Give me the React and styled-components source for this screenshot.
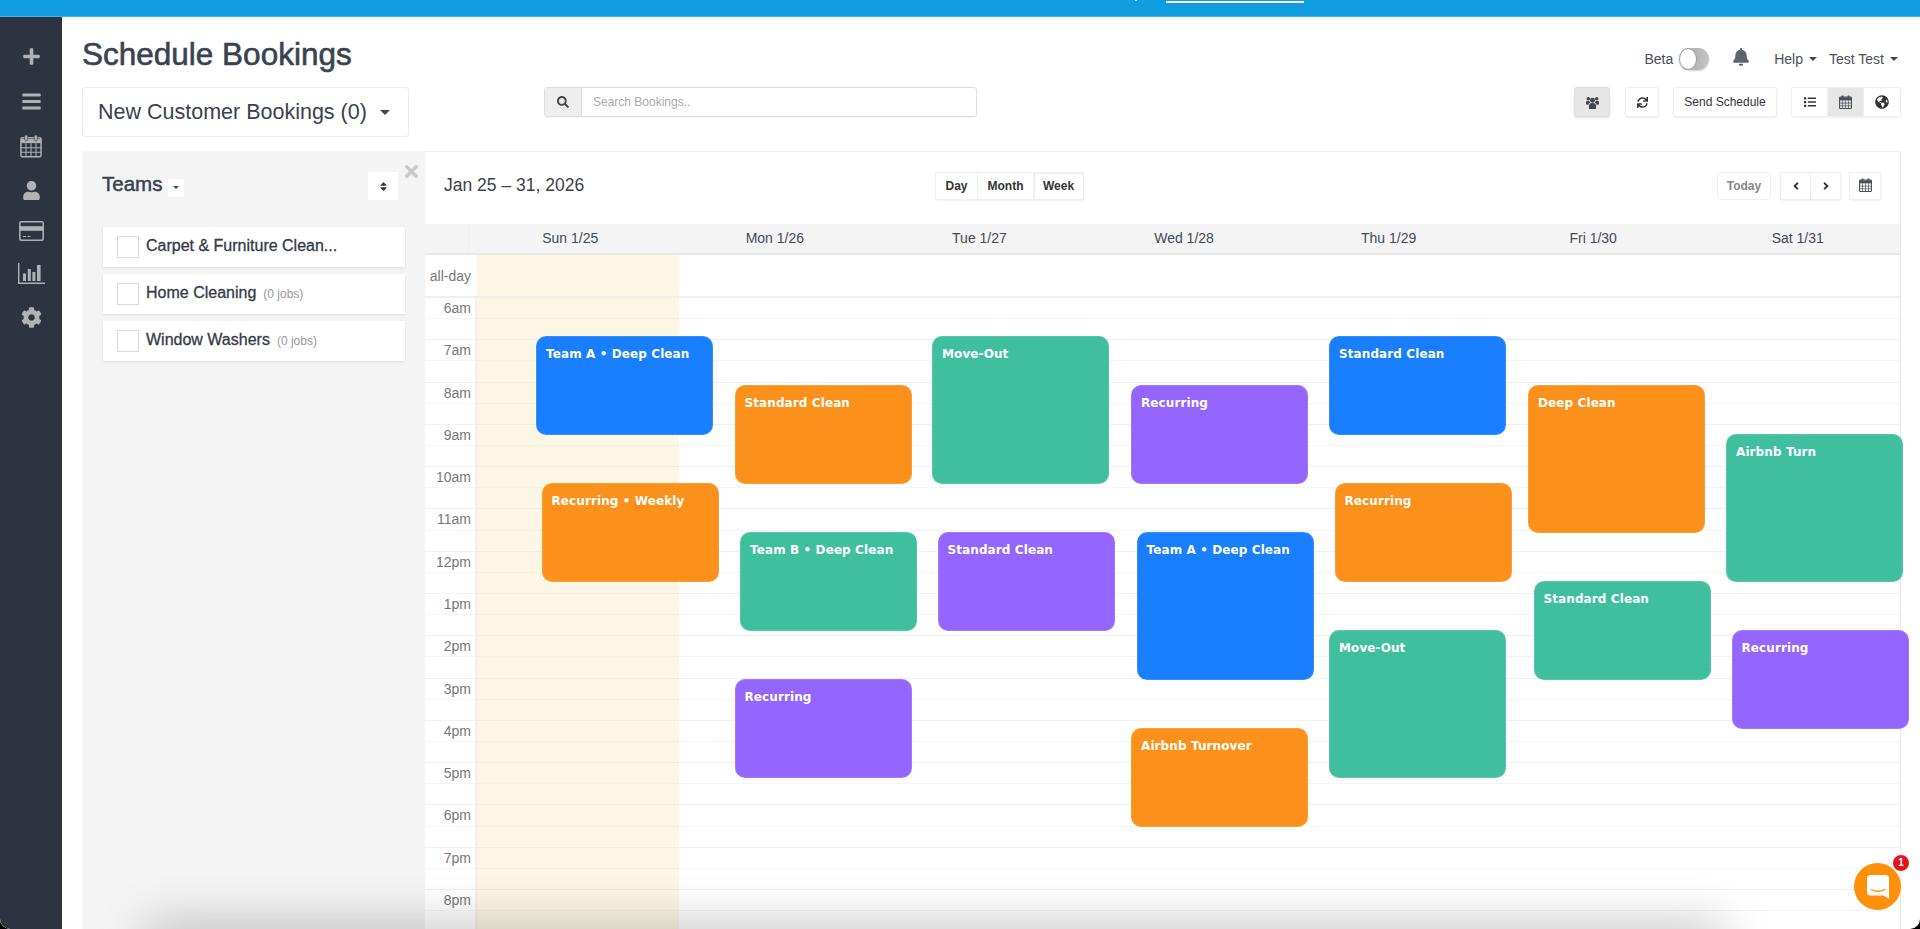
import React from 'react';
import styled, { createGlobalStyle } from 'styled-components';
import {
  FaAngleLeft, FaAngleRight, FaBars, FaBell, FaCog, FaGlobeAmericas, FaList,
  FaPlus, FaSearch, FaSort, FaSync, FaTimes, FaUser,
} from 'react-icons/fa';

const GlobalStyle = createGlobalStyle`
  html, body {
    margin: 0;
    height: 100%;
    overflow: hidden;
    background: #000;
  }
  * { box-sizing: border-box; }
  #root { height: 100%; }
`;

const Frame = styled.div`
  position: relative;
  height: 929px;
  display: flex;
  flex-direction: column;
  background: #fff;
  border-radius: 0 0 10px 10px;
  overflow: hidden;
  font-family: 'Liberation Sans', Arial, sans-serif;
  color: #3a4250;
`;

const TopBar = styled.div`
  height: 17px;
  flex: none;
  display: flex;
  align-items: flex-start;
  background: #0e9de0;
  border-bottom: 1px solid #3db4ec;
  padding-left: 1135px;
`;

const TabTick = styled.div`
  width: 2px;
  height: 1px;
  margin-right: 29px;
  background: #d8effa;
`;

const TabUnderline = styled.div`
  width: 138px;
  height: 2px;
  margin-top: 1px;
  background: #fff;
`;

const Body = styled.div`
  flex: 1;
  min-height: 0;
  display: flex;
`;

const Sidebar = styled.nav`
  width: 62px;
  flex: none;
  background: #2d3440;
  padding-top: 27px;
  color: #b0b2b6;
  border-bottom-left-radius: 10px;
`;

const NavItem = styled.div`
  height: ${(p) => p.$step}px;
  padding-bottom: ${(p) => p.$step - 24}px;
  display: flex;
  align-items: center;
  justify-content: center;
`;

const Main = styled.main`
  flex: 1;
  min-width: 0;
  display: flex;
  flex-direction: column;
  padding: 0 19px 0 20px;
`;

const TitleRow = styled.div`
  height: 70px;
  flex: none;
  display: flex;
  justify-content: space-between;
  align-items: flex-start;
`;

const Title = styled.h1`
  margin: 19px 0 0;
  font-size: 31.5px;
  line-height: 36px;
  font-weight: 400;
  -webkit-text-stroke: 0.6px #3a4250;
`;

const UserMenu = styled.div`
  display: flex;
  align-items: center;
  margin-top: 31px;
  padding-right: 3px;
  height: 22px;
  font-size: 14px;
  color: #4a4f57;
`;

const Toggle = styled.div`
  width: 30px;
  height: 22px;
  margin: 0 23px 0 6px;
  border-radius: 11px;
  background: linear-gradient(90deg, #ddd 0, #b4b4b4 55%, #c6c6c6 100%);
  box-shadow: 0 1px 2px rgba(0, 0, 0, 0.2);
  padding: 1px 0 1px 1px;
`;

const ToggleKnob = styled.div`
  width: 16px;
  height: 20px;
  border-radius: 50%;
  background: #fff;
  box-shadow: 0 0 0 1px #a3a3a3;
`;

const BellWrap = styled.div`
  display: flex;
  margin: -5px 24px 0 0;
  color: #5d6470;
`;

const MenuLink = styled.span`
  display: flex;
  align-items: center;
  margin-left: ${(p) => p.$gap || 0}px;
`;

const Caret = styled.span`
  display: inline-block;
  margin-left: ${(p) => p.$gap ?? 6}px;
  border-top: ${(p) => p.$size || 4}px solid #3f4650;
  border-left: ${(p) => p.$size || 4}px solid transparent;
  border-right: ${(p) => p.$size || 4}px solid transparent;
`;

const ToolRow = styled.div`
  height: 64px;
  flex: none;
  display: flex;
  align-items: flex-start;
`;

const BookingSelect = styled.div`
  width: 327px;
  height: 50px;
  padding-left: 15px;
  display: flex;
  align-items: center;
  border: 1px solid #ececec;
  border-radius: 3px;
  font-size: 21.5px;
  color: #3a4250;
`;

const Search = styled.div`
  width: 433px;
  height: 30px;
  margin-left: 135px;
  display: flex;
  border: 1px solid #dedede;
  border-radius: 3px;
  box-shadow: 0 1px 1px rgba(0, 0, 0, 0.04);
`;

const SearchAddon = styled.div`
  width: 37px;
  display: flex;
  align-items: center;
  justify-content: center;
  background: #eee;
  border-right: 1px solid #dedede;
  color: #444;
`;

const SearchText = styled.div`
  flex: 1;
  padding-left: 11px;
  font-size: 12px;
  line-height: 28px;
  color: #a9a9a9;
`;

const Actions = styled.div`
  margin-left: auto;
  display: flex;
  align-items: flex-start;
`;

const ToolButton = styled.div`
  width: ${(p) => p.$w}px;
  height: 30px;
  margin-left: ${(p) => p.$gap || 0}px;
  display: flex;
  align-items: center;
  justify-content: center;
  font-size: 12px;
  color: #333;
  background: ${(p) => (p.$active ? '#e6e6e6' : '#fff')};
  border: 1px solid ${(p) => (p.$active ? '#ddd' : '#efefef')};
  border-radius: 3px;
  box-shadow: 0 1px 2px rgba(0, 0, 0, ${(p) => (p.$active ? 0.12 : 0.08)});
`;

const ToolGroup = styled.div`
  display: flex;
  margin-left: ${(p) => p.$gap || 0}px;
  border-radius: 3px;
  box-shadow: 0 1px 2px rgba(0, 0, 0, 0.06);
`;

const GroupItem = styled.div`
  width: ${(p) => p.$w}px;
  height: ${(p) => p.$h || 30}px;
  display: flex;
  align-items: center;
  justify-content: center;
  background: ${(p) => (p.$active ? '#e6e6e6' : '#fff')};
  border: 1px solid #efefef;
  margin-left: -1px;
  font-size: 12px;
  font-weight: 700;
  color: #333;
  ${(p) => p.$pressed && 'box-shadow: inset 1px 1px 2px rgba(0, 0, 0, 0.08);'}
`;

const Workspace = styled.div`
  flex: 1;
  min-height: 0;
  display: flex;
`;

const TeamsPanel = styled.aside`
  position: relative;
  width: 343px;
  flex: none;
  background: #f4f4f4;
  padding: 21px 20px 0 21px;
`;

const TeamsHead = styled.div`
  height: 28px;
  margin-bottom: 27px;
  display: flex;
  align-items: center;
  padding-right: 7px;
`;

const TeamsTitle = styled.div`
  margin: -4px 0 0 -1px;
  font-size: 20.5px;
  -webkit-text-stroke: 0.5px #3a4250;
`;

const TeamsCaret = styled.div`
  width: 16px;
  height: 18px;
  margin: 3px 0 0 6px;
  display: flex;
  align-items: center;
  justify-content: center;
  background: #fff;
`;

const SortButton = styled.div`
  width: 30px;
  height: 28px;
  margin-left: auto;
  display: flex;
  align-items: center;
  justify-content: center;
  background: #fff;
  color: #333;
`;

const CloseIcon = styled.div`
  position: absolute;
  top: 11px;
  right: 4px;
  display: flex;
  color: #c9c9c9;
`;

const TeamCard = styled.div`
  height: 40px;
  margin-bottom: 7px;
  padding-left: 14px;
  display: flex;
  align-items: center;
  background: #fff;
  box-shadow: 0 1px 2px rgba(0, 0, 0, 0.1);
`;

const Check = styled.div`
  width: 22px;
  height: 22px;
  flex: none;
  margin-right: 7px;
  background: #fff;
  border: 1px solid #dcd9d5;
`;

const TeamName = styled.span`
  margin-top: -2px;
  font-size: 16px;
  color: #333b48;
  -webkit-text-stroke: 0.3px #333b48;
`;

const JobCount = styled.span`
  margin-left: 7px;
  font-size: 12px;
  color: #999;
`;

const Calendar = styled.section`
  flex: 1;
  min-width: 0;
  display: flex;
  flex-direction: column;
  border-top: 1px solid #f1f1f1;
  border-right: 1px solid #e6e6e6;
`;

const CalToolbar = styled.div`
  height: 72px;
  flex: none;
  display: flex;
  align-items: center;
  padding: 0 19px 5px 19px;
`;

const RangeLabel = styled.div`
  width: 492px;
  font-size: 17.5px;
  color: #3c424c;
`;

const TodayButton = styled.div`
  width: 54px;
  height: 28px;
  margin-left: auto;
  display: flex;
  align-items: center;
  justify-content: center;
  font-size: 12px;
  font-weight: 700;
  color: #888;
  border: 1px solid #f0f0f0;
  border-radius: 3px;
`;

const DayHeader = styled.div`
  height: 31px;
  flex: none;
  display: flex;
  background: #f4f4f4;
  border-bottom: 2px solid #e8e8e8;
  padding-left: 43px;
`;

const DayLabel = styled.div`
  flex: 1;
  text-align: center;
  font-size: 14px;
  line-height: 29px;
  color: #444a54;
  &:first-child {
    box-shadow: inset 1px 0 0 #efefef;
  }
`;

const AllDayRow = styled.div`
  height: 43px;
  flex: none;
  display: flex;
  border-bottom: 2px solid #eee;
`;

const AxisCell = styled.div`
  width: 50px;
  flex: none;
  padding-right: 4px;
  text-align: right;
  font-size: 14px;
  line-height: ${(p) => p.$lh}px;
  color: #777;
`;

const TodayCell = styled.div`
  width: 202px;
  margin-left: 2px;
  background: #fcf7e4;
`;

const TimeGrid = styled.div`
  position: relative;
  flex: 1;
  min-height: 0;
`;

const SlotRow = styled.div`
  height: 21.15px;
  display: flex;
  border-bottom: 1px solid ${(p) => (p.$hourEnd ? '#f0f0f0' : '#f5f5f5')};
`;

const TodayColumn = styled.div`
  position: absolute;
  top: 0;
  bottom: 0;
  left: 52px;
  width: 202px;
  background: rgba(248, 236, 190, 0.42);
`;

const AxisRule = styled.div`
  position: absolute;
  top: 0;
  bottom: 0;
  left: 50px;
  width: 2px;
  background: #efefef;
`;

const EventCard = styled.div`
  position: absolute;
  left: ${(p) => p.$left}px;
  top: ${(p) => p.$top}px;
  width: 177px;
  height: ${(p) => p.$height}px;
  padding: 10px 9px 0;
  border-radius: 10px;
  background: ${(p) => p.$color};
  border: 1px solid rgba(255, 255, 255, 0.12);
  color: #fff;
  font-family: 'DejaVu Sans', sans-serif;
  font-weight: 700;
  font-size: 12px;
  line-height: 15px;
  letter-spacing: 0.1px;
  white-space: nowrap;
`;

const BottomShade = styled.div`
  position: absolute;
  left: 150px;
  right: 200px;
  bottom: -30px;
  height: 30px;
  box-shadow: 0 0 48px 4px rgba(0, 0, 0, 0.26);
  pointer-events: none;
`;

const ChatBubble = styled.div`
  position: absolute;
  left: 1854px;
  top: 863px;
  width: 47px;
  height: 47px;
  display: flex;
  align-items: center;
  justify-content: center;
  border-radius: 50%;
  background: #ff9009;
`;

const ChatBadge = styled.div`
  position: absolute;
  top: -9px;
  right: -9px;
  width: 18px;
  height: 18px;
  border-radius: 50%;
  background: #e0131f;
  border: 1px solid #fff;
  color: #fff;
  font-size: 10px;
  font-weight: 700;
  line-height: 16px;
  text-align: center;
`;

const CalendarGlyph = ({ size = 22 }) => (
  <svg width={size} height={size * 1.08} viewBox="0 0 24 26" fill="none" stroke="currentColor">
    <rect x="1" y="4" width="22" height="21" rx="1.5" strokeWidth="1.6" />
    <path d="M1 5.5h22V10H1z" fill="currentColor" stroke="none" />
    <rect x="5" y="1" width="3.4" height="6.5" rx="1.5" fill="currentColor" stroke="#2d3440" strokeWidth="0.7" />
    <rect x="15.6" y="1" width="3.4" height="6.5" rx="1.5" fill="currentColor" stroke="#2d3440" strokeWidth="0.7" />
    <path d="M1 15h22M1 20h22M6.5 10v15M12 10v15M17.5 10v15" strokeWidth="1.1" />
  </svg>
);

const SmallCalendar = ({ size = 13 }) => (
  <svg width={size} height={size * 1.08} viewBox="0 0 24 26" fill="none" stroke="#4a4f57">
    <rect x="1" y="4" width="22" height="21" rx="1.5" strokeWidth="2" />
    <path d="M1 5h22v5H1z" fill="#4a4f57" stroke="none" />
    <path d="M6.5 1v6M17.5 1v6" strokeWidth="3.2" />
    <path d="M1 15h22M1 20h22M6.5 10v15M12 10v15M17.5 10v15" strokeWidth="1.3" />
  </svg>
);

const CardGlyph = () => (
  <svg width="25" height="20" viewBox="0 0 25 20" fill="none" stroke="currentColor">
    <rect x="0.8" y="0.8" width="23.4" height="18.4" rx="1.5" strokeWidth="1.5" />
    <path d="M1 5.2h23v4.6H1z" fill="currentColor" stroke="none" />
    <path d="M4 15.5h3M8.5 15.5h3" strokeWidth="1.2" />
  </svg>
);

const ChartGlyph = () => (
  <svg width="27" height="21" viewBox="0 0 27 21" fill="currentColor">
    <path d="M0.7 0v20.2H27" fill="none" stroke="currentColor" strokeWidth="1.4" />
    <rect x="5" y="10.5" width="3" height="7.5" />
    <rect x="9.8" y="6" width="3" height="12" />
    <rect x="14.4" y="9" width="3" height="9" />
    <rect x="19" y="2" width="3.6" height="16" />
  </svg>
);

const TeamGlyph = () => (
  <svg width="13" height="13" viewBox="0 0 24 24" fill="#3f4650">
    <circle cx="12" cy="8" r="4.6" />
    <circle cx="4.2" cy="5" r="3.2" />
    <circle cx="19.8" cy="5" r="3.2" />
    <path d="M5.5 24v-6.5A5 5 0 0 1 10 13h4a5 5 0 0 1 4.5 4.5V24z" />
    <path d="M0 15v-3.5A3 3 0 0 1 3 9h3.2a6.5 6.5 0 0 0 1.6 3.6A6.5 6.5 0 0 0 4 16.5z" />
    <path d="M24 15v-3.5A3 3 0 0 0 21 9h-3.2a6.5 6.5 0 0 1-1.6 3.6A6.5 6.5 0 0 1 20 16.5z" />
  </svg>
);

const ChatGlyph = () => (
  <svg width="22" height="24" viewBox="0 0 22 24">
    <path
      d="M3.5 0h15A3.5 3.5 0 0 1 22 3.5V24l-5.5-3.5h-13A3.5 3.5 0 0 1 0 17V3.5A3.5 3.5 0 0 1 3.5 0z"
      fill="#fff"
    />
    <path d="M4.5 14.5c3.5 2.4 9.5 2.4 13 0" fill="none" stroke="#ff9009" strokeWidth="1.5" strokeLinecap="round" />
  </svg>
);

const NAV_ICONS = [
  { step: 45, icon: <FaPlus size={19} /> },
  { step: 45, icon: <FaBars size={21} /> },
  { step: 44, icon: <CalendarGlyph /> },
  { step: 41, icon: <FaUser size={19} /> },
  { step: 42, icon: <CardGlyph /> },
  { step: 44, icon: <ChartGlyph /> },
  { step: 44, icon: <FaCog size={21} /> },
];

const TEAMS = [
  { name: 'Carpet & Furniture Clean...' },
  { name: 'Home Cleaning', jobs: '(0 jobs)' },
  { name: 'Window Washers', jobs: '(0 jobs)' },
];

const DAYS = ['Sun 1/25', 'Mon 1/26', 'Tue 1/27', 'Wed 1/28', 'Thu 1/29', 'Fri 1/30', 'Sat 1/31'];

const HOURS = ['6am', '7am', '8am', '9am', '10am', '11am', '12pm', '1pm', '2pm', '3pm', '4pm', '5pm', '6pm', '7pm', '8pm'];

const BLUE = '#1a7fff';
const ORANGE = '#fb911a';
const TEAL = '#40bf9f';
const PURPLE = '#9466ff';

// left edge of the cards of each day, measured from the calendar's left side
const DAY_LEFT = [111, 309.5, 507, 706, 904, 1103, 1301];

// shifted = second lane, slot = 49px steps from the first card, span in slots
const EVENTS = [
  { day: 0, slot: 0, span: 2, color: BLUE, label: 'Team A • Deep Clean' },
  { day: 0, shifted: true, slot: 3, span: 2, color: ORANGE, label: 'Recurring • Weekly' },
  { day: 1, slot: 1, span: 2, color: ORANGE, label: 'Standard Clean' },
  { day: 1, shifted: true, slot: 4, span: 2, color: TEAL, label: 'Team B • Deep Clean' },
  { day: 1, slot: 7, span: 2, color: PURPLE, label: 'Recurring' },
  { day: 2, slot: 0, span: 3, color: TEAL, label: 'Move-Out' },
  { day: 2, shifted: true, slot: 4, span: 2, color: PURPLE, label: 'Standard Clean' },
  { day: 3, slot: 1, span: 2, color: PURPLE, label: 'Recurring' },
  { day: 3, shifted: true, slot: 4, span: 3, color: BLUE, label: 'Team A • Deep Clean' },
  { day: 3, slot: 8, span: 2, color: ORANGE, label: 'Airbnb Turnover' },
  { day: 4, slot: 0, span: 2, color: BLUE, label: 'Standard Clean' },
  { day: 4, shifted: true, slot: 3, span: 2, color: ORANGE, label: 'Recurring' },
  { day: 4, slot: 6, span: 3, color: TEAL, label: 'Move-Out' },
  { day: 5, slot: 1, span: 3, color: ORANGE, label: 'Deep Clean' },
  { day: 5, shifted: true, slot: 5, span: 2, color: TEAL, label: 'Standard Clean' },
  { day: 6, slot: 2, span: 3, color: TEAL, label: 'Airbnb Turn' },
  { day: 6, shifted: true, slot: 6, span: 2, color: PURPLE, label: 'Recurring' },
];

const App = () => (
  <>
    <GlobalStyle />
    <Frame>
      <TopBar>
        <TabTick />
        <TabUnderline />
      </TopBar>
      <Body>
        <Sidebar>
          {NAV_ICONS.map((item, i) => (
            <NavItem key={i} $step={item.step}>{item.icon}</NavItem>
          ))}
        </Sidebar>
        <Main>
          <TitleRow>
            <Title>Schedule Bookings</Title>
            <UserMenu>
              <span>Beta</span>
              <Toggle><ToggleKnob /></Toggle>
              <BellWrap><FaBell size={18} /></BellWrap>
              <MenuLink>Help<Caret /></MenuLink>
              <MenuLink $gap={12}>Test Test<Caret /></MenuLink>
            </UserMenu>
          </TitleRow>
          <ToolRow>
            <BookingSelect>
              New Customer Bookings (0)
              <Caret $gap={13} $size={5} />
            </BookingSelect>
            <Search>
              <SearchAddon><FaSearch size={12} /></SearchAddon>
              <SearchText>Search Bookings..</SearchText>
            </Search>
            <Actions>
              <ToolButton $w={36} $active><TeamGlyph /></ToolButton>
              <ToolButton $w={34} $gap={15}><FaSync size={11} /></ToolButton>
              <ToolButton $w={104} $gap={14}>Send Schedule</ToolButton>
              <ToolGroup $gap={15}>
                <GroupItem $w={37}><FaList size={12} /></GroupItem>
                <GroupItem $w={37} $active><SmallCalendar /></GroupItem>
                <GroupItem $w={38}><FaGlobeAmericas size={14} /></GroupItem>
              </ToolGroup>
            </Actions>
          </ToolRow>
          <Workspace>
            <TeamsPanel>
              <CloseIcon><FaTimes size={19} /></CloseIcon>
              <TeamsHead>
                <TeamsTitle>Teams</TeamsTitle>
                <TeamsCaret><Caret $gap={0} $size={3} /></TeamsCaret>
                <SortButton><FaSort size={11} /></SortButton>
              </TeamsHead>
              {TEAMS.map((team) => (
                <TeamCard key={team.name}>
                  <Check />
                  <TeamName>{team.name}</TeamName>
                  {team.jobs && <JobCount>{team.jobs}</JobCount>}
                </TeamCard>
              ))}
            </TeamsPanel>
            <Calendar>
              <CalToolbar>
                <RangeLabel>Jan 25 – 31, 2026</RangeLabel>
                <ToolGroup>
                  <GroupItem $w={43} $h={28}>Day</GroupItem>
                  <GroupItem $w={57} $h={28}>Month</GroupItem>
                  <GroupItem $w={51} $h={28} $pressed>Week</GroupItem>
                </ToolGroup>
                <TodayButton>Today</TodayButton>
                <ToolGroup $gap={10}>
                  <GroupItem $w={31} $h={28}><FaAngleLeft size={12} /></GroupItem>
                  <GroupItem $w={31} $h={28}><FaAngleRight size={12} /></GroupItem>
                </ToolGroup>
                <ToolGroup $gap={9}>
                  <GroupItem $w={32} $h={28}><SmallCalendar /></GroupItem>
                </ToolGroup>
              </CalToolbar>
              <DayHeader>
                {DAYS.map((day) => <DayLabel key={day}>{day}</DayLabel>)}
              </DayHeader>
              <AllDayRow>
                <AxisCell $lh={42}>all-day</AxisCell>
                <TodayCell />
              </AllDayRow>
              <TimeGrid>
                {HOURS.map((hour) => (
                  <React.Fragment key={hour}>
                    <SlotRow><AxisCell $lh={21}>{hour}</AxisCell></SlotRow>
                    <SlotRow $hourEnd />
                  </React.Fragment>
                ))}
                <AxisRule />
                <TodayColumn />
                {EVENTS.map((ev) => (
                  <EventCard
                    key={`${ev.day}-${ev.slot}`}
                    $left={DAY_LEFT[ev.day] + (ev.shifted ? 5.5 : 0)}
                    $top={38 + ev.slot * 49}
                    $height={ev.span * 49 + 1}
                    $color={ev.color}
                  >
                    {ev.label}
                  </EventCard>
                ))}
              </TimeGrid>
            </Calendar>
          </Workspace>
        </Main>
      </Body>
      <BottomShade />
      <ChatBubble>
        <ChatGlyph />
        <ChatBadge>1</ChatBadge>
      </ChatBubble>
    </Frame>
  </>
);

export default App;
